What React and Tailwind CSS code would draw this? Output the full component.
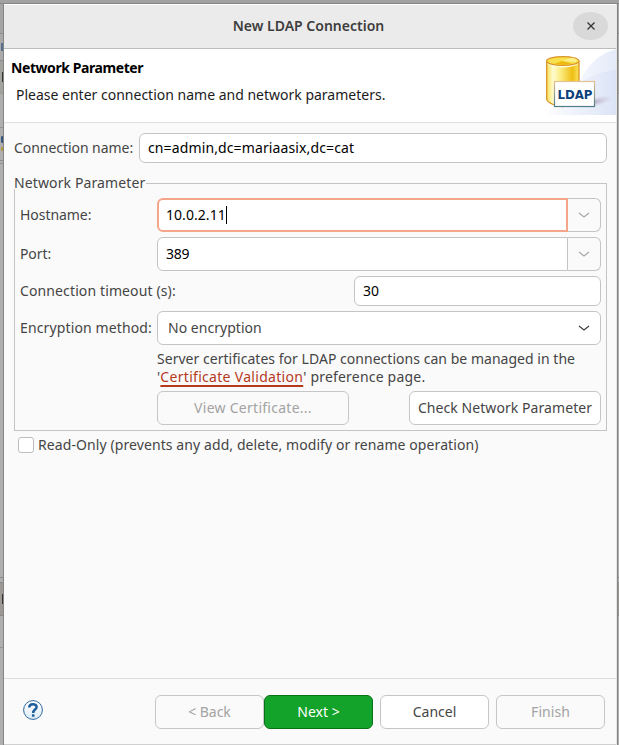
import React from 'react';

const field = 'flex items-center border border-[#c4c4c4] bg-white text-black';
const button = 'flex h-[34px] shrink-0 items-center justify-center rounded-[6px] border border-[#c6c6c6]';

function Chevron({ className }) {
  return (
    <svg className={className} width="12" height="8" viewBox="0 0 12 8" fill="none" stroke="currentColor" strokeWidth="1.2">
      <path d="M1 2 L6 6 L11 2" />
    </svg>
  );
}

function LdapBanner() {
  return (
    <svg width="74" height="66" viewBox="0 0 74 66" className="shrink-0">
      <defs>
        <linearGradient id="sky" x1="0" x2="1">
          <stop offset="0" stopColor="#ffffff" />
          <stop offset="0.5" stopColor="#edf1fb" />
          <stop offset="1" stopColor="#dbe4f6" />
        </linearGradient>
        <linearGradient id="sky2" x1="0" x2="1">
          <stop offset="0" stopColor="#f7f9fe" />
          <stop offset="1" stopColor="#e4eaf8" />
        </linearGradient>
        <linearGradient id="gold" x1="0" x2="1">
          <stop offset="0" stopColor="#f8e25c" />
          <stop offset="0.2" stopColor="#fffbd0" />
          <stop offset="0.45" stopColor="#fbea7c" />
          <stop offset="0.8" stopColor="#efbe14" />
          <stop offset="1" stopColor="#fae45c" />
        </linearGradient>
        <linearGradient id="cardEdge" x1="0" y1="0" x2="0" y2="1">
          <stop offset="0" stopColor="#e3c293" />
          <stop offset="1" stopColor="#4f7c86" />
        </linearGradient>
        <radialGradient id="shade">
          <stop offset="0" stopColor="#a99cb8" stopOpacity="0.75" />
          <stop offset="1" stopColor="#c9bcd0" stopOpacity="0" />
        </radialGradient>
      </defs>
      <path d="M30 66 C34 28 48 8 74 0 V66 Z" fill="url(#sky2)" />
      <path d="M0 66 C20 56 34 24 74 21 V66 Z" fill="url(#sky)" />
      <ellipse cx="53" cy="53" rx="18" ry="5" fill="url(#shade)" transform="rotate(-14 53 53)" />
      <path d="M4.700 12 V50 C5 54 15 57.500 20.500 57.500 C28 57.500 37 54 37 50 V12" fill="url(#gold)" stroke="#db9426" strokeWidth="1.300" />
      <ellipse cx="20.800" cy="13.500" rx="15.500" ry="5" fill="#fffce0" />
      <ellipse cx="20.800" cy="12" rx="16.200" ry="4.400" fill="#f8df4c" stroke="#db9426" strokeWidth="1.200" />
      <path d="M20 12 L30 8.500 L35 10.500 L34 13 Z" fill="#fbf08a" />
      <path d="M20 12 L12 15 L22 16 L30 14.500 Z" fill="#f0b912" />
      <rect x="12.500" y="32.500" width="40" height="25" fill="#fff" stroke="url(#cardEdge)" strokeWidth="1.200" />
      <text x="15.500" y="50" textLength="35" lengthAdjust="spacingAndGlyphs" className="fill-[#0c3f7c] font-['DejaVu_Sans',sans-serif] text-[12.500px] font-bold">LDAP</text>
    </svg>
  );
}

function HelpIcon() {
  return (
    <svg width="20" height="20" viewBox="0 0 20 20" className="shrink-0" fill="none">
      <defs>
        <linearGradient id="help" x1="0" y1="0" x2="0" y2="1">
          <stop offset="0" stopColor="#ffffff" />
          <stop offset="1" stopColor="#dcebf6" />
        </linearGradient>
      </defs>
      <circle cx="10" cy="10" r="9.400" fill="url(#help)" stroke="#2f679f" strokeWidth="1" />
      <path d="M6.200 7.600 C6.200 3.200 13.600 3.200 13.600 7 C13.600 9.700 10.200 9.500 10.200 13" stroke="#215f9c" strokeWidth="2.500" />
      <rect x="8.900" y="14.200" width="2.600" height="2.600" rx="0.600" fill="#215f9c" />
    </svg>
  );
}

function ComboField({ value, focused }) {
  return (
    <div className="flex h-[34px] w-[444px]">
      <div
        className={
          focused
            ? 'flex w-[411px] items-center rounded-l-[6px] border-2 border-[#f4a58a] bg-white pl-[7px] text-black'
            : 'flex w-[411px] items-center rounded-l-[6px] border border-[#c4c4c4] bg-white pl-2 text-black'
        }
      >
        <span className={focused ? 'tracking-[0.050px]' : 'tracking-[-0.200px]'}>{value}</span>
        {focused && <span className="h-[18px] w-px bg-black" />}
      </div>
      <div className="flex flex-1 items-center justify-center rounded-r-[6px] border border-l-0 border-[#c4c4c4] bg-[#fafafa]">
        <Chevron className="text-[#a8a8a8]" />
      </div>
    </div>
  );
}

function Backdrop({ side }) {
  const left = side === 'left';
  return (
    <div className={left ? 'flex w-1 shrink-0 flex-col overflow-hidden border-r border-[#858585] bg-[#b0afae]' : 'flex w-[2px] shrink-0 flex-col border-l border-[#858585] bg-[#adadad]'}>
      <div className="h-[30px] border-b border-[#8d8d8d] bg-[#a5a5a5]" />
      <div className="flex h-[27px] items-center border-b border-[#8d8d8d] bg-[#aaa]">
        {left && <span className="ml-px h-2 w-[2px] bg-[#55708c]" />}
      </div>
      <div className="flex h-[33px] items-center justify-end border-b border-[#999] bg-[#a4a29f]">
        {left && <span className="h-[10px] w-px bg-[#333]" />}
      </div>
      {left && (
        <>
          <div className="flex h-[34px] flex-col border-b border-[#929292]" />
          <div className="flex h-[33px] flex-col border-b border-[#8d8d8d] pt-2">
            <span className="ml-px h-[7px] w-[2px] rounded-l border-2 border-r-0 border-[#36557d]" />
            <span className="mt-1 ml-px h-1 w-[2px] bg-[#b49a4a]" />
          </div>
          <div className="h-[3px] border-b border-[#929292]" />
        </>
      )}
      <div className="flex-1" />
      <div className="h-[5px] border-t border-[#8a8a8a]" />
      <div className="flex h-[34px] items-center justify-end border-y border-[#8a8a8a] bg-[#9c9995]">
        {left && <span className="h-[10px] w-px bg-[#333]" />}
      </div>
      <div className={left ? 'h-8 border-b border-[#929292]' : 'h-8'} />
      <div className="h-[97px]" />
    </div>
  );
}

export default function App() {
  return (
    <div className="flex h-[745px] w-[619px] flex-col overflow-hidden bg-[#a5a5a5] font-['Noto_Sans',sans-serif] text-[14px] leading-[18px] text-[#454545]">
      <div className="h-1 shrink-0 border-b border-[#858585] bg-[#a2a2a2]" />
      <div className="flex min-h-0 flex-1">
        <Backdrop side="left" />
        <main className="flex min-w-0 flex-1 flex-col border-r border-[#e4e4e4] bg-[#fafafa]">
          <header className="flex h-[45px] shrink-0 items-center border-t border-b border-t-white border-b-[#bcbcbc] bg-[#ebebeb] pr-2 pb-px">
            <h1 className="flex-1 pl-[40px] text-center font-semibold tracking-[0.010px] text-[#3d3d3d]">New LDAP Connection</h1>
            <button className="flex h-7 w-[35px] items-center justify-center rounded-[50%] bg-[#d9d9d9]">
              <svg width="8" height="8" viewBox="0 0 8 8" stroke="#333" strokeWidth="1.300"><path d="M0.500 0.500 L7.500 7.500 M7.500 0.500 L0.500 7.500" /></svg>
            </button>
          </header>
          <section className="flex h-[74px] shrink-0 justify-between border-b border-[#dfdfdf] bg-white text-black">
            <div className="pt-[10px] pl-[7px] whitespace-nowrap">
              <h2 className="font-bold tracking-[-0.420px]">Network Parameter</h2>
              <p className="mt-[9px] pl-[5px] tracking-[0px] text-[#1c1c1c]">Please enter connection name and network parameters.</p>
            </div>
            <LdapBanner />
          </section>
          <div className="flex flex-1 flex-col pt-[10px] pr-[9px] pl-[10px] whitespace-nowrap">
            <div className="flex h-[30px] items-center">
              <label className="w-[125px] shrink-0 tracking-[-0.050px]">Connection name:</label>
              <div className={`${field} h-[30px] flex-1 rounded-[6px] pl-2`}>
                <span className="tracking-[0.120px]">cn=admin,dc=mariaasix,dc=cat</span>
              </div>
            </div>
            <div className="mt-[11px] flex h-[18px] items-center">
              <span className="w-[132px] shrink-0 tracking-[0.120px]">Network Parameter</span>
              <span className="h-px flex-1 bg-[#c4c4c4]" />
            </div>
            <div className="-mt-[9px] h-[248px] w-[593px] border border-t-0 border-[#c4c4c4] [clip-path:polygon(0_6px,100px_6px,100px_0,100%_0,100%_100%,0_100%)]" />
            <div className="-mt-[233px] flex h-[227px] flex-col gap-[6px] pr-[6px] pl-[6px]">
              <div className="flex items-center">
                <label className="w-[137px] shrink-0 tracking-[-0.050px]">Hostname:</label>
                <ComboField value="10.0.2.11" focused />
              </div>
              <div className="-mt-px flex items-center">
                <label className="w-[137px] shrink-0 tracking-[-0.100px]">Port:</label>
                <ComboField value="389" />
              </div>
              <div className="-mt-px flex items-center">
                <label className="w-[334px] shrink-0 tracking-[0.120px]">Connection timeout (s):</label>
                <div className={`${field} h-[30px] w-[247px] rounded-[6px] pl-2`}><span className="tracking-[0px]">30</span></div>
              </div>
              <div className="-mt-px flex items-center">
                <label className="w-[137px] shrink-0 tracking-[0.130px]">Encryption method:</label>
                <div className="flex h-[34px] w-[444px] items-center justify-between rounded-[6px] border border-[#c4c4c4] bg-white pr-[10px] pl-[10px]">
                  <span className="tracking-[0.030px]">No encryption</span>
                  <Chevron className="text-[#3d3d3d]" />
                </div>
              </div>
              <p className="-mt-px h-9 pl-[137px]">
                <span className="block tracking-[0.030px]">Server certificates for LDAP connections can be managed in the</span>
                <span className="block tracking-[0.200px]">
                  '<a className="tracking-[0.300px] text-[#b5391c] underline decoration-2 underline-offset-3">Certificate Validation</a>' preference page.
                </span>
              </p>
              <div className="-mt-px flex justify-between pl-[137px]">
                <button className={`${button} w-[192px] tracking-[0.270px] text-[#a3a3a3]`}>View Certificate...</button>
                <button className={`${button} w-[192px] bg-white tracking-[0.070px]`}>Check Network Parameter</button>
              </div>
            </div>
            <label className="mt-[12px] flex h-4 items-center gap-1 pl-1">
              <span className="h-4 w-4 shrink-0 rounded-[3px] border border-[#bdbdbd] bg-white" />
              <span className="tracking-[0.090px]">Read-Only (prevents any add, delete, modify or rename operation)</span>
            </label>
          </div>
          <footer className="flex h-[67px] shrink-0 items-start border-t border-b border-t-[#dedede] border-b-[#d0d0d0] pt-4 pr-[11px] pl-[19px]">
            <div className="flex flex-1 pt-[5px]"><HelpIcon /></div>
            <button className={`${button} w-[109px] tracking-[-0.050px] text-[#a3a3a3]`}>&lt; Back</button>
            <button className="flex h-[34px] w-[109px] shrink-0 items-center justify-center rounded-[6px] border border-[#087318] bg-[#14a32a] tracking-[0px] text-white">Next &gt;</button>
            <button className={`${button} ml-[7px] w-[109px] bg-white tracking-[0px]`}>Cancel</button>
            <button className={`${button} ml-[7px] w-[109px] tracking-[0.050px] text-[#a3a3a3]`}>Finish</button>
          </footer>
        </main>
        <Backdrop side="right" />
      </div>
    </div>
  );
}
